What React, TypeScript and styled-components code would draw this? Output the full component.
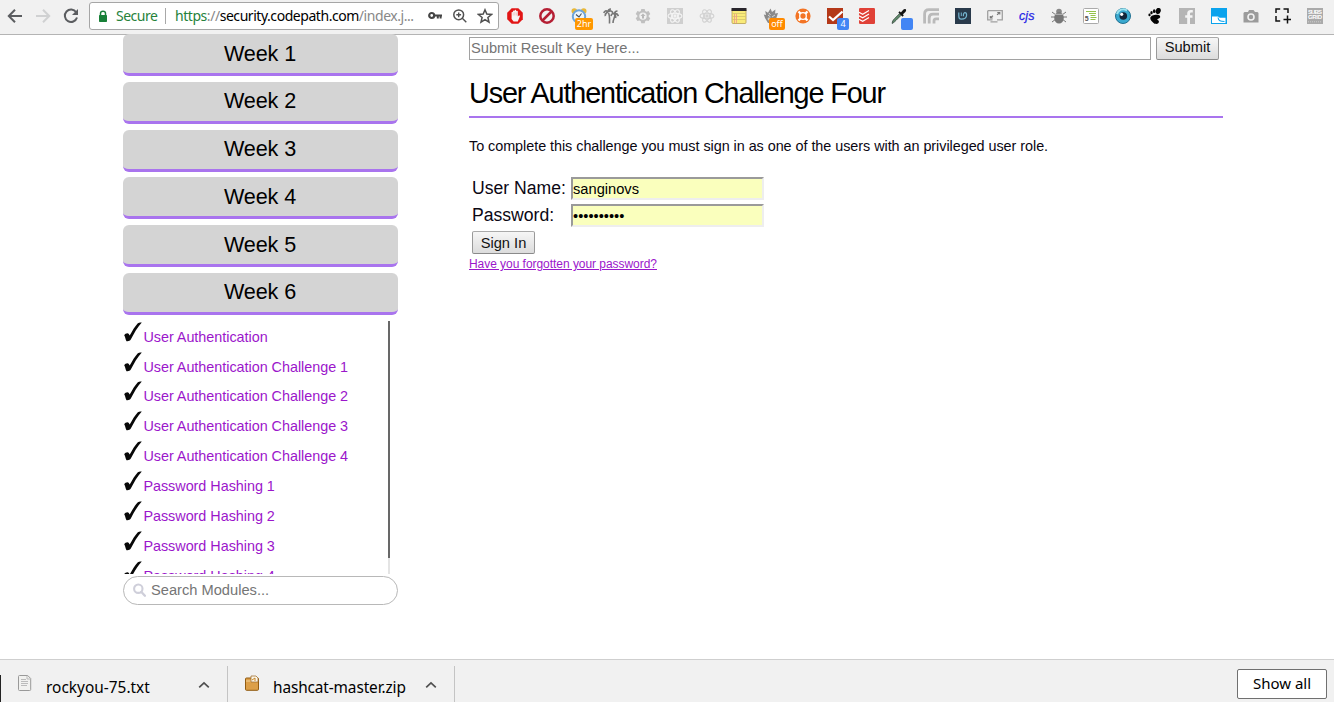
import React from 'react';
import styled, { createGlobalStyle } from 'styled-components';

const GlobalStyle = createGlobalStyle`
  html, body { margin: 0; padding: 0; background: #fff; overflow: hidden; }
  * { box-sizing: border-box; }
  body, input, button { font-family: 'Liberation Sans', Arial, sans-serif; }
`;

const Browser = styled.div`
  display: flex;
  flex-direction: column;
  width: 1334px;
  height: 702px;
  overflow: hidden;
`;

const Toolbar = styled.header`
  display: flex;
  align-items: flex-start;
  flex: 0 0 35px;
  height: 35px;
  background: #f1f1f1;
  border-bottom: 1px solid #b4b4b4;
  font-family: 'Noto Sans', sans-serif;
`;

const NavButtons = styled.div`
  display: flex;
  width: 89px;
  padding: 8px 0 0 7px;
  gap: 12px;
`;

const AddressBar = styled.div`
  display: flex;
  width: 410px;
  height: 28px;
  margin-top: 2px;
  padding: 0 4px 0 8px;
  align-items: center;
  background: #fff;
  border: 1px solid #a6a6a6;
  border-radius: 3px;
  font-size: 14px;
  line-height: 26px;
  white-space: nowrap;
`;

const Secure = styled.span`
  flex: 0 0 49px;
  margin-left: 8px;
  color: #26823a;
  letter-spacing: -0.5px;
`;

const Divider = styled.span`
  flex: 0 0 1px;
  height: 16px;
  background: #a8a8a8;
`;

const Url = styled.span`
  flex: 0 0 261px;
  padding-left: 9px;
  color: #000;
  letter-spacing: -0.45px;
`;

const UrlPart = styled.span<{ $tone: string }>`
  color: ${(p) => p.$tone};
`;

const AddressIcons = styled.div`
  display: flex;
  gap: 9px;
`;

const Extensions = styled.div`
  display: flex;
`;

const Extension = styled.div`
  position: relative;
  display: flex;
  flex: 0 0 32px;
  height: 32px;
  align-items: center;
  justify-content: center;
`;

const Badge = styled.span<{ $color: string; $width: number; $left: number }>`
  position: absolute;
  top: 18px;
  left: ${(p) => p.$left}px;
  width: ${(p) => p.$width}px;
  height: 12px;
  border-radius: 2px;
  background: ${(p) => p.$color};
  color: #fff;
  font-size: 9px;
  line-height: 12px;
  text-align: center;
`;

const Page = styled.main`
  display: flex;
  flex: 1;
  min-height: 0;
  padding-left: 123px;
`;

const Sidebar = styled.aside`
  width: 275px;
  margin-right: 71px;
`;

const WeekList = styled.div`
  display: flex;
  flex-direction: column;
  gap: 5.75px;
  margin-top: -1px;
`;

const WeekButton = styled.button`
  width: 275px;
  height: 42px;
  padding: 0 1px 0 0;
  border: 0;
  border-bottom: 3px solid #a974ee;
  border-radius: 6px;
  background: #d4d4d4;
  font-size: 21.6px;
  letter-spacing: -0.12px;
  line-height: 38px;
  color: #000;
`;

const ModuleScroller = styled.div`
  display: flex;
  width: 267px;
  height: 253px;
  margin-top: 6px;
  overflow: hidden;
`;

const ModuleList = styled.ul`
  flex: 1;
  margin: 0;
  padding: 0;
  list-style: none;
`;

const Module = styled.li`
  display: flex;
  height: 29.85px;
  font-size: 14.4px;
  line-height: 17px;
  letter-spacing: -0.03px;
  color: #9b16cb;
  svg { flex: none; }
`;

const ModuleName = styled.span`
  padding: 8px 0 0 0.4px;
`;

const ScrollTrack = styled.div`
  width: 2px;
  background: #e4e4e4;
`;

const ScrollThumb = styled.div`
  height: 237px;
  background: #686868;
`;

const SearchBox = styled.label`
  display: flex;
  align-items: center;
  height: 29px;
  margin-top: 2px;
  padding-left: 9px;
  border: 1px solid #b8b8b8;
  border-radius: 15px;
`;

const SearchInput = styled.input`
  width: 220px;
  margin-left: 5px;
  padding: 0;
  border: 0;
  outline: 0;
  font-size: 14.67px;
  &::placeholder { color: #757575; }
`;

const Content = styled.section`
  width: 754px;
  padding-top: 2px;
  color: #0b0713;
`;

const KeyRow = styled.div`
  display: flex;
  gap: 5px;
`;

const KeyInput = styled.input`
  width: 682px;
  height: 23px;
  padding: 0 1px 1px;
  border: 1px solid #a2a2a2;
  font-size: 14.67px;
  &::placeholder { color: #757575; }
`;

const PushButton = styled.button<{ $top?: number; $bottom?: number }>`
  width: 63px;
  height: 23px;
  padding: ${(p) => p.$top ?? 0}px 0 ${(p) => p.$bottom ?? 0}px;
  border: 1px solid #999;
  border-color: #aaa #999 #8a8a8a #999;
  border-radius: 2px;
  background: linear-gradient(#f6f6f6, #dcdcdc);
  font-size: 14.67px;
  line-height: 19px;
  color: #111;
`;

const Title = styled.h1`
  height: 58px;
  margin: 0;
  padding-top: 16px;
  border-bottom: 2px solid #a974ee;
  font-size: 28.8px;
  font-weight: 400;
  line-height: 34px;
  letter-spacing: -1.14px;
  color: #000;
`;

const Intro = styled.p`
  margin: 20px 0 0;
  font-size: 14.4px;
  line-height: 17px;
  letter-spacing: -0.044px;
`;

const SignInForm = styled.div`
  display: grid;
  grid-template-columns: 97px 193px;
  grid-auto-rows: 23px;
  gap: 4px 2px;
  margin-top: 22px;
  padding-left: 3px;
  font-size: 17.6px;
  line-height: 22px;
`;

const Field = styled.input`
  width: 193px;
  height: 23px;
  padding: 0;
  border: 2px solid;
  border-color: #9a9a9a #eeeeee #eeeeee #9a9a9a;
  background: #faffbd;
  font-size: 14.67px;
  color: #000;
`;

const ForgotLink = styled.a`
  display: block;
  margin-top: 3px;
  font-size: 12px;
  line-height: 14px;
  letter-spacing: -0.045px;
  color: #9b16cb;
  text-decoration: underline;
`;

const DownloadBar = styled.footer`
  display: flex;
  flex: 0 0 43px;
  background: #f1f1f1;
  border-top: 1px solid #cfcfcf;
  font-family: 'Noto Sans', sans-serif;
`;

const Download = styled.div<{ $width: number }>`
  display: flex;
  width: ${(p) => p.$width}px;
  height: 36px;
  margin-top: 6px;
  padding: 9px 17px 0 16px;
  border-right: 1px solid #c4c4c4;
  svg { flex: none; }
`;

const DownloadEdge = styled.div`
  width: 1px;
  height: 27px;
  margin-top: 15px;
  background: #222;
`;

const FileName = styled.span<{ $spacing: number }>`
  flex: 1;
  margin: 3px 0 0 13px;
  font-size: 15.4px;
  line-height: 20px;
  letter-spacing: ${(p) => p.$spacing}px;
  white-space: nowrap;
`;

const ShowAll = styled.button`
  width: 90px;
  height: 30px;
  margin: 9px 7px 0 auto;
  padding: 0 0 2px;
  border: 1px solid #707070;
  border-radius: 2px;
  background: #fff;
  font-family: 'Noto Sans', sans-serif;
  font-size: 15px;
  line-height: 25px;
`;

type IconProps = { size?: number; box?: string; children: React.ReactNode };
const Icon = ({ size = 16, box = '0 0 16 16', children }: IconProps) => (
  <svg width={size} height={size} viewBox={box} fill="none">{children}</svg>
);

const Check = () => (
  <svg width="20" height="24" viewBox="0 0 20 24">
    <path d="M1.2 14.2C2 12.6 4.8 11.3 5.8 12.9L6.7 14.6C9.2 9.8 12 5.2 14.6 2.4C15.8 1.3 17 1.4 18.8 1.4C14.6 6 11 12 7.8 18.6C7 20 5 20.6 3.5 20.2C2.3 18.4 2.5 16 1.2 14.2Z" fill="#080808" />
  </svg>
);

const AtomShape = ({ color }: { color: string }) => (
  <g stroke={color} strokeWidth="1.1">
    <ellipse cx="8" cy="8" rx="6.9" ry="2.7" />
    <ellipse cx="8" cy="8" rx="6.9" ry="2.7" transform="rotate(60 8 8)" />
    <ellipse cx="8" cy="8" rx="6.9" ry="2.7" transform="rotate(120 8 8)" />
    <circle cx="8" cy="8" r="1.1" fill={color} />
  </g>
);

type ExtensionItem = {
  name: string;
  art: React.ReactNode;
  badge?: { text: string; color: string; width: number; left: number };
};

const extensions: ExtensionItem[] = [
  { name: 'blocker', art: <><path d="M4.7.2h6.6l4.5 4.6v6.4l-4.5 4.6H4.7L.2 11.2V4.8z" fill="#e21515" /><path d="M4.6 9V4.6c0-1 1.4-1 1.4 0V3.2c0-1 1.6-1 1.6 0v-.6c0-1 1.6-1 1.6 0v1c0-1 1.6-1 1.6 0V8.5l1-1c.9-.4 1.4.4 1 1.1L10.8 13.6H6.6L4.6 11z" fill="#f7f3f3" /><path d="M6.2 4.5v3M7.8 4v3.5M9.4 4.5v3" stroke="#e9a0a0" strokeWidth=".5" /></> },
  { name: 'prohibit', art: <><circle cx="8" cy="8" r="6.7" stroke="#b51f34" strokeWidth="2.5" /><path d="M3.5 12.5l9-9" stroke="#b51f34" strokeWidth="2.5" /></> },
  { name: 'alarm', art: <><circle cx="3.3" cy="3" r="2.8" fill="#e9b838" /><circle cx="12.7" cy="3" r="2.8" fill="#e9b838" /><circle cx="8" cy="8.5" r="6.2" fill="#edf6fc" stroke="#6ea5da" strokeWidth="2" /><path d="M5 6.5l3 2.5 2.5-3.5" stroke="#46505c" strokeWidth="1.1" /></>, badge: { text: '2hr', color: '#ff9800', width: 18, left: 12 } },
  { name: 'palms', art: <><path d="M5.5 5c1.5 3 1 7 1 10.5M12 6c0 4-2 5-2 9" stroke="#777" strokeWidth="1.6" /><path d="M5 4C3 2 1.5 3 .8 5M5 4C2.5 5 2 7 2.5 8M5 4c2-2 4-1 5 1M5 4c0-2 1-3 3-3M11.5 6c-2-1-3 0-3.5 2M11.5 6c0-2 1-3 3-3M11.5 6c2-1 3 0 4 2M11.5 6c1 1 1.5 2 1 4" stroke="#777" strokeWidth="1.7" /></> },
  { name: 'gear', art: <><path d="M6.3 1h3.4l.5 2.1 1.3.7 2.1-.7 1.7 2.9L13.7 7.4v1.4l1.6 1.4-1.7 2.9-2.1-.6-1.3.7-.5 2.1H6.3l-.5-2.1-1.3-.7-2.1.6L.7 10.2l1.6-1.4V7.4L.7 6l1.7-2.9 2.1.7 1.3-.7zM8 4.4a3.7 3.7 0 100 7.4 3.7 3.7 0 000-7.4z" fill="#c0c0c0" fillRule="evenodd" /><path d="M8 5.5L10.5 8H9v2.5H7V8H5.5z" fill="#b8b8b8" /></> },
  { name: 'react tools', art: <><path d="M0 0h16v16H0z" fill="#cfcfcf" /><AtomShape color="#f4f4f4" /></> },
  { name: 'atom', art: <AtomShape color="#d2d2d2" /> },
  { name: 'notepad', art: <><rect x="1" y="1" width="14" height="14.5" rx="1" fill="#f9eb79" stroke="#b79d52" strokeWidth=".8" /><path d="M.5 0h15v3H.5z" fill="#28252c" /><path d="M1.5 5.5h13M1.5 8.5h13M1.5 11.5h13" stroke="#cfc06c" strokeWidth=".7" /><path d="M3.5 6v9M5.5 6v9" stroke="#f0958a" strokeWidth=".8" /></> },
  { name: 'fox', art: <><path d="M2 10L.8 6.5 3 7l-.8-4L5 4.8 7.5.5 9 4l3.4-2.4-.3 4L15 5l-1.6 5-3 5H5z" fill="#8a8a8a" /><path d="M5 7l2.5 2M9 9l3-2M6 5l1.5 2" stroke="#ddd" strokeWidth=".9" /><circle cx="6" cy="11" r="1.4" fill="#ccc" /></>, badge: { text: 'off', color: '#ff8a00', width: 16, left: 14 } },
  { name: 'ring', art: <><circle cx="8" cy="8" r="7.6" fill="#f37424" /><circle cx="8" cy="8" r="3.3" stroke="#fff" strokeWidth="1.3" /><path d="M3.5 3.5l2.1 2.1M12.5 3.5l-2.1 2.1M3.5 12.5l2.1-2.1M12.5 12.5l-2.1-2.1" stroke="#fff" strokeWidth="2.3" /></> },
  { name: 'tick', art: <><path d="M0 0h16v16H0z" fill="#b43818" /><path d="M2 8.5l4 3.5L15.5 3.5" stroke="#fff" strokeWidth="2.3" /></>, badge: { text: '4', color: '#4285f4', width: 12, left: 18 } },
  { name: 'tasks', art: <><rect width="16" height="16" rx="1.2" fill="#e04137" /><path d="M0 4.2l3.7 2L10 2.5M0 7.7l3.7 2L10 6M0 11.2l3.7 2L10 9.5" stroke="#fff" strokeWidth="1.2" /></> },
  { name: 'dropper', art: <><path d="M1.2 15.5c0-2 .8-3.3 2.3-4.8l5-5 1.6 1.6-5 5c-1.5 1.5-2 2-3.9 3.2z" fill="#5f8a6a" stroke="#314438" strokeWidth=".8" /><path d="M8 3.8L12.2 8" stroke="#111" strokeWidth="1.8" /><path d="M9.5 5l2.7-3.2c2-2 4 0 2.2 2.2L11.2 7z" fill="#111" /></>, badge: { text: '', color: '#4285f4', width: 12, left: 18 } },
  { name: 'feed', art: <path d="M1.6 15.5V6c0-3 2-4.4 4.4-4.4h10M6.2 15.5V10c0-2.4 1.3-3.8 3.8-3.8h6M11 15.5V13c0-1.5.7-2.2 2-2.2h3" stroke="#bababa" strokeWidth="2.8" /> },
  { name: 'u', art: <><path d="M0 0h16v16H0z" fill="#293a4b" /><path d="M3.8 4.5v3.8c0 1.9 1 2.9 2.4 2.9 3.2 0 5.4-1.7 5.4-4.2 0-3.1-3.2-3.1-3.2 0v1.2" stroke="#75b5d0" strokeWidth="1.2" /><path d="M6.3 4.5v3.6" stroke="#75b5d0" /></> },
  { name: 'screen', art: <><path d="M.7 2.7h14.6v9.2H10M5.5 11.9H.7V2.7M3.5 13.8h7" stroke="#a0a0a0" strokeWidth="1.3" /><path d="M3.3 8v2h2.4M4 9.3l2-1.5M12.8 6.5v-2h-2.5M12 5.2l-2 1.5" stroke="#777" strokeWidth="1.1" /></> },
  { name: 'cjs', art: <text x="0" y="11.5" fill="#2525e6" stroke="#2525e6" strokeWidth=".25" fontFamily="Liberation Sans" fontStyle="italic" fontSize="12.5" textLength="15.5">cjs</text> },
  { name: 'bug', art: <><path d="M1 4l4 3M15 4l-4 3M0 9h16M1 14l4-3M15 14l-4-3" stroke="#777" /><circle cx="8" cy="3.5" r="2.8" fill="#888" /><ellipse cx="8" cy="9.8" rx="4.8" ry="5.8" fill="#777" /><path d="M4 6.3h8" stroke="#bbb" /></> },
  { name: 'lines', art: <><rect x=".5" y=".5" width="15" height="15" rx="1" fill="#fff" stroke="#aaa" /><path d="M3 3.5h10M6 5.5h7M7.5 7.5h5M7.5 9.5h6M7.5 11.5h5" stroke="#95c34a" strokeWidth="1" /><text x="1.8" y="12.5" fill="#555" fontFamily="Liberation Sans" fontWeight="bold" fontSize="7">5</text></> },
  { name: 'eye', art: <><circle cx="8" cy="8" r="7.5" fill="#3aa9cf" stroke="#207091" /><path d="M2 6a6.5 6.5 0 0110-3.5" stroke="#9ce3ef" strokeWidth="2" /><circle cx="8.3" cy="8" r="3.8" fill="#12263b" /><circle cx="6.7" cy="6.3" r="1.6" fill="#fff" /></> },
  { name: 'foot', art: <><ellipse cx="11.2" cy="3" rx="2.5" ry="3.1" fill="#050505" transform="rotate(20 11.2 3)" /><ellipse cx="7.2" cy="3.2" rx="1.3" ry="1.9" fill="#050505" /><ellipse cx="4.5" cy="4.7" rx="1.2" ry="1.6" fill="#050505" /><ellipse cx="2.5" cy="6.9" rx="1.1" ry="1.4" fill="#050505" /><path d="M3.3 10C3.4 6.7 13.2 5.4 13.2 8.7c0 2-3 1.6-2.9 2.9.1.8 1.9.7 1.6 2.4-.4 2.4-4 2.4-5.6.7C5 13.4 3.2 12 3.3 10z" fill="#050505" /></> },
  { name: 'facebook', art: <><path d="M0 0h16v16H0z" fill="#b5b5b5" /><path d="M11 16V9.8h2.5V7.2H11V5.8c0-1 .5-1.4 1.4-1.4h1.4V2h-2C9.3 2 8.2 3.4 8.2 5.5v1.7H6.2v2.6h2V16z" fill="#f4f4f4" /></> },
  { name: 'blue tile', art: <><path d="M0 0h16v16H0z" fill="#0aa3ed" /><path d="M1 8.5h6l1.7 1.2h5.8V15H1z" fill="#fff" /><path d="M7 9.5c.5 3.5 2.5 4 6.5 4" stroke="#0aa3ed" strokeWidth="1.1" /></> },
  { name: 'camera', art: <><path d="M1.5 4H5l1-2h4.5L12 4h2.5l1 1v9.5H.5V5z" fill="#9b9b9b" /><circle cx="8" cy="9" r="3" stroke="#f1f1f1" strokeWidth="1.6" /></> },
  { name: 'capture', art: <path d="M1 5V1h4.2M8.5 1H13v4M1 8v5h4.2M12.5 7.5v8M8.5 11.5h8" stroke="#111" strokeWidth="1.5" /> },
  { name: 'subsgrid', art: <><path d="M0 0h16v16H0z" fill="#aaa" /><text x="1" y="5.8" fill="#fff" fontFamily="Liberation Sans" fontWeight="bold" fontSize="6" textLength="14">SUBS</text><text x="1" y="11.3" fill="#fff" fontFamily="Liberation Sans" fontWeight="bold" fontSize="6" textLength="14">GRID</text><path d="M1 13.8h14" stroke="#ccc" strokeDasharray="1 1" /></> },
];

const modules = [
  'User Authentication',
  'User Authentication Challenge 1',
  'User Authentication Challenge 2',
  'User Authentication Challenge 3',
  'User Authentication Challenge 4',
  'Password Hashing 1',
  'Password Hashing 2',
  'Password Hashing 3',
  'Password Hashing 4',
];

const Caret = () => (
  <svg width="12" height="20" viewBox="0 0 12 20" fill="none"><path d="M1.2 12.3L6 7.8l4.8 4.5" stroke="#505050" strokeWidth="1.7" /></svg>
);

export default function App() {
  return (
    <Browser>
      <GlobalStyle />
      <Toolbar>
        <NavButtons>
          <Icon><path d="M15 8H2M8 1.8L1.8 8 8 14.2" stroke="#5b5d60" strokeWidth="2" /></Icon>
          <Icon><path d="M1 8h13M8 1.8L14.2 8 8 14.2" stroke="#d0d1d2" strokeWidth="2" /></Icon>
          <Icon><path d="M13.2 4.2A6.2 6.2 0 1014 9.5" stroke="#5b5d60" strokeWidth="2" /><path d="M15 1v6H9z" fill="#5b5d60" /></Icon>
        </NavButtons>
        <AddressBar>
          <svg width="10" height="13" viewBox="0 0 10 13"><path d="M2.5 6V3.4C2.5.5 7.5.5 7.5 3.4V6" fill="none" stroke="#188038" strokeWidth="1.5" /><rect x="1" y="5" width="8" height="7" rx=".7" fill="#188038" /></svg>
          <Secure>Secure</Secure>
          <Divider />
          <Url><UrlPart $tone="#26823a">https</UrlPart><UrlPart $tone="#888">://</UrlPart>security.codepath.com<UrlPart $tone="#888">/index.j...</UrlPart></Url>
          <AddressIcons>
            <Icon><circle cx="4.7" cy="7.5" r="2.5" stroke="#454545" strokeWidth="2.2" /><path d="M7 7.5h8M10.8 7.5v3M13.6 7.5v3" stroke="#454545" strokeWidth="2" /></Icon>
            <Icon><circle cx="6.7" cy="6.8" r="4.9" stroke="#505050" strokeWidth="1.5" /><path d="M10.3 10.3l4 4M6.7 4.4v4.8M4.3 6.8h4.8" stroke="#505050" strokeWidth="1.4" /></Icon>
            <Icon><path d="M8 1.8l1.8 4.3 4.7.4-3.6 3 1.1 4.7L8 11.7l-4 2.5 1.1-4.7-3.6-3 4.7-.4z" stroke="#505050" strokeWidth="1.5" /></Icon>
          </AddressIcons>
        </AddressBar>
        <Extensions>
          {extensions.map((item) => (
            <Extension key={item.name}>
              <Icon>{item.art}</Icon>
              {item.badge && <Badge $color={item.badge.color} $width={item.badge.width} $left={item.badge.left}>{item.badge.text}</Badge>}
            </Extension>
          ))}
        </Extensions>
      </Toolbar>
      <Page>
        <Sidebar>
          <WeekList>
            {[1, 2, 3, 4, 5, 6].map((week) => <WeekButton key={week}>Week {week}</WeekButton>)}
          </WeekList>
          <ModuleScroller>
            <ModuleList>
              {modules.map((name) => <Module key={name}><Check /><ModuleName>{name}</ModuleName></Module>)}
            </ModuleList>
            <ScrollTrack><ScrollThumb /></ScrollTrack>
          </ModuleScroller>
          <SearchBox>
            <svg width="13" height="14" viewBox="0 0 13 14" fill="none"><circle cx="5.3" cy="5.7" r="4.2" stroke="#cfcfda" strokeWidth="2.1" /><path d="M8.4 9l3.5 3.7" stroke="#cfcfda" strokeWidth="2.4" strokeLinecap="round" /></svg>
            <SearchInput placeholder="Search Modules..." />
          </SearchBox>
        </Sidebar>
        <Content>
          <KeyRow>
            <KeyInput placeholder="Submit Result Key Here..." />
            <PushButton $bottom={2}>Submit</PushButton>
          </KeyRow>
          <Title>User Authentication Challenge Four</Title>
          <Intro>To complete this challenge you must sign in as one of the users with an privileged user role.</Intro>
          <SignInForm>
            <span>User Name:</span><Field defaultValue="sanginovs" />
            <span>Password:</span><Field type="password" defaultValue="aaaaaaaaaa" />
            <PushButton $top={1}>Sign In</PushButton>
          </SignInForm>
          <ForgotLink href="#">Have you forgotten your password?</ForgotLink>
        </Content>
      </Page>
      <DownloadBar>
        <DownloadEdge />
        <Download $width={227}>
          <Icon><path d="M1.5 1.5q0-1 1-1h8.2l3 3v11q0 1-1 1H2.5q-1 0-1-1z" fill="#f1f1ef" stroke="#999" /><path d="M10 .8V4h3.5M4 4.5h5M4 6.5h7M4 8.5h7M4 10.5h6" stroke="#bbb" /></Icon>
          <FileName $spacing={0.02}>rockyou-75.txt</FileName>
          <Caret />
        </Download>
        <Download $width={227}>
          <Icon><rect x="1.5" y="3" width="13" height="12.3" rx="1" fill="#dc9f48" stroke="#925c12" /><path d="M2 6h12" stroke="#f3d39a" /><path d="M7 1h5l2 2v4H7z" fill="#faf5e8" stroke="#a37233" strokeWidth=".8" /><path d="M8 5l3-2v3" stroke="#c78527" /></Icon>
          <FileName $spacing={-0.12}>hashcat-master.zip</FileName>
          <Caret />
        </Download>
        <ShowAll>Show all</ShowAll>
      </DownloadBar>
    </Browser>
  );
}
